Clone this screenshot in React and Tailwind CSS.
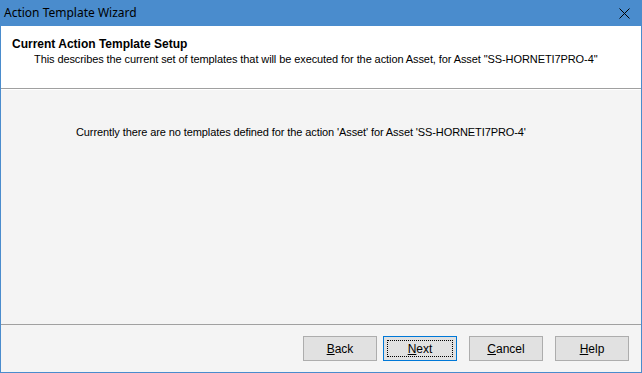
import React from "react";

function Btn({ children, focused }) {
  return (
    <div
      className={
        "w-[74px] h-[25px] flex items-center justify-center bg-[#e1e1e1] text-[12px] text-black border " +
        (focused ? "border-[#0078d7]" : "border-[#adadad]")
      }
    >
      {focused ? (
        <div className="w-[66px] h-[17px] border border-dotted border-black flex items-center justify-center">
          {children}
        </div>
      ) : (
        children
      )}
    </div>
  );
}

export default function App() {
  return (
    <div
      className="w-[642px] h-[373px] flex flex-col bg-[#f4f4f4] border-x border-b border-[#4a8ccd] overflow-hidden"
      style={{ fontFamily: "'Liberation Sans', sans-serif" }}
    >
      <div className="h-[26px] shrink-0 bg-[#4a8ccd] flex items-center justify-between pl-[4px] pr-[12px] -mx-px">
        <span
          className="text-[12px] text-black"
          style={{ fontFamily: "'Noto Sans', 'Liberation Sans', sans-serif" }}
        >
          Action Template Wizard
        </span>
        <svg width="11" height="11" viewBox="0 0 11 11">
          <path d="M0.5 0.5 L10.5 10.5 M10.5 0.5 L0.5 10.5" stroke="#000" strokeWidth="1" />
        </svg>
      </div>
      <div className="h-[62px] shrink-0 bg-white pt-[10px] pl-[11px]">
        <div className="text-[12px] font-bold text-black leading-[16px]">
          Current Action Template Setup
        </div>
        <div className="text-[11px] text-black leading-[15px] pl-[22px] tracking-[-0.09px]">
          This describes the current set of templates that will be executed for the action Asset, for Asset "SS-HORNETI7PRO-4"
        </div>
      </div>
      <div className="h-px bg-[#a0a0a0] shrink-0" />
      <div className="h-px bg-white shrink-0" />
      <div className="flex-1 pt-[35px] pl-[75px]">
        <div className="text-[11px] text-black leading-[15px] tracking-[-0.1px]">
          Currently there are no templates defined for the action 'Asset' for Asset 'SS-HORNETI7PRO-4'
        </div>
      </div>
      <div className="h-px bg-[#a0a0a0] shrink-0" />
      <div className="h-[47px] shrink-0 flex items-start justify-end pt-[11px] pr-[12px]">
        <Btn><span><u>B</u>ack</span></Btn>
        <div className="w-[6px]" />
        <Btn focused><span><u>N</u>ext</span></Btn>
        <div className="w-[12px]" />
        <Btn><span><u>C</u>ancel</span></Btn>
        <div className="w-[12px]" />
        <Btn><span><u>H</u>elp</span></Btn>
      </div>
    </div>
  );
}
